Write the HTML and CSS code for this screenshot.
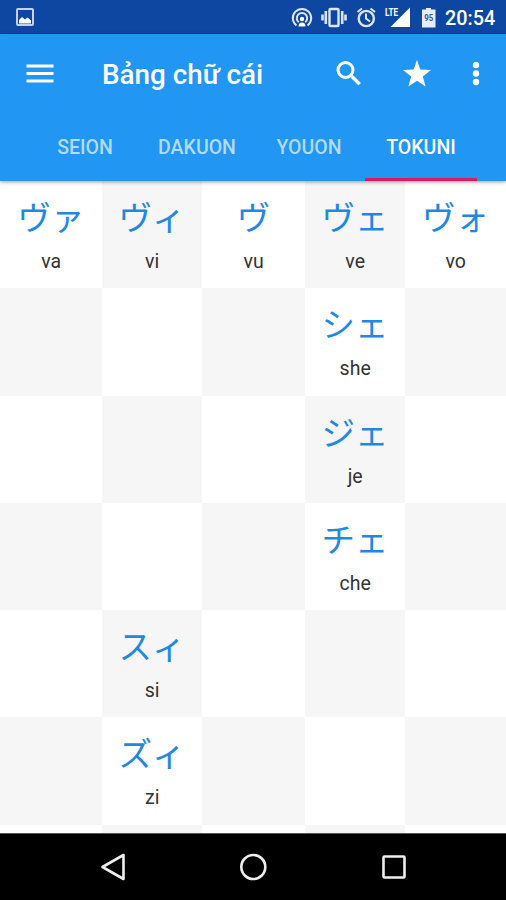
FILE: index.html
```html
<!DOCTYPE html>
<html lang="vi">
<head>
<meta charset="utf-8">
<title>Bảng chữ cái</title>
<link rel="stylesheet" href="styles.css">
</head>
<body>
<div class="screen">
  <header class="status">
    <svg class="status-picture" width="18" height="18" viewBox="0 0 18 18"><rect x="1" y="1" width="16" height="16" rx="1" fill="none" stroke="#c5d0ec" stroke-width="2"/><path d="M3 15.500v-3.500l3-3 3 2.500 2.500-2 3.500 3v3z" fill="#fff"/></svg>
    <svg class="status-icons" width="146" height="26" viewBox="291 5 146 26">
      <g fill="none" stroke="#dce4f6" stroke-width="2">
        <path d="M296.500 25.500a9.200 9.200 0 1 1 11 0M298.800 22.300a5.200 5.200 0 1 1 6.400 0"/>
        <rect x="329.500" y="9" width="9" height="17" rx="1" stroke-width="2.400"/>
        <path d="M325.800 11v13M322.500 14.500v6M342.200 11v13M345.500 14.500v6" stroke-width="2.600"/>
        <circle cx="366.300" cy="18.500" r="7.600" stroke-width="2.400"/>
        <path d="M366 13.500v5l4 3M357.500 12l4.500-3.500M370.500 8.500l4.500 3.500"/>
      </g>
      <circle cx="302" cy="19" r="2.200" fill="#fff"/><path d="M298.500 26.500q0-4 3.500-4t3.500 4z" fill="#fff"/>
      <path d="M410 7.500V27h-19.500z" fill="#fff"/>
      <text class="lte" x="385" y="15.800" textLength="13" lengthAdjust="spacingAndGlyphs">LTE</text>
      <path d="M422 9.500h4V8h5v1.500h4.500v18H422z" fill="#e6ecf8"/>
      <text class="battery" x="424.300" y="20.500" textLength="9" lengthAdjust="spacingAndGlyphs">95</text>
    </svg>
    <span class="clock">20:54</span>
  </header>
  <div class="appbar">
    <div class="toolbar">
      <svg class="menu" width="28" height="20" viewBox="0 0 28 20"><path d="M.500 2h27M.500 9.500h27M.500 17h27" stroke="#fff" stroke-width="3.200"/></svg>
      <h1>Bảng chữ cái</h1>
      <svg class="search" width="26" height="26" viewBox="0 0 26 26"><circle cx="9.500" cy="9" r="7.500" fill="none" stroke="#fff" stroke-width="3"/><path d="M14.700 14.200l9 9" stroke="#fff" stroke-width="3.400"/></svg>
      <svg class="star" width="28" height="27" viewBox="0 0 28 27"><path d="M14 0l3.300 9.500 10.700.4-8.200 6.500L22.600 26.500 14 20.800 5.400 26.500l2.800-10.100L0 9.900l10.700-.4z" fill="#fff"/></svg>
      <svg class="more" width="8" height="24" viewBox="0 0 8 24"><g fill="#fff"><circle cx="4" cy="3" r="3.200"/><circle cx="4" cy="11.500" r="3.200"/><circle cx="4" cy="20" r="3.200"/></g></svg>
    </div>
    <nav class="tabs"><span>SEION</span><span>DAKUON</span><span>YOUON</span><span class="active">TOKUNI</span></nav>
  </div>
  <main class="grid">
    <div class="cell"><b>ヴァ</b><i>va</i></div><div class="cell"><b>ヴィ</b><i>vi</i></div><div class="cell"><b>ヴ</b><i>vu</i></div><div class="cell"><b>ヴェ</b><i>ve</i></div><div class="cell"><b>ヴォ</b><i>vo</i></div>
    <div class="cell"></div><div class="cell"></div><div class="cell"></div><div class="cell"><b>シェ</b><i>she</i></div><div class="cell"></div>
    <div class="cell"></div><div class="cell"></div><div class="cell"></div><div class="cell"><b>ジェ</b><i>je</i></div><div class="cell"></div>
    <div class="cell"></div><div class="cell"></div><div class="cell"></div><div class="cell"><b>チェ</b><i>che</i></div><div class="cell"></div>
    <div class="cell"></div><div class="cell"><b>スィ</b><i>si</i></div><div class="cell"></div><div class="cell"></div><div class="cell"></div>
    <div class="cell"></div><div class="cell"><b>ズィ</b><i>zi</i></div><div class="cell"></div><div class="cell"></div><div class="cell"></div>
    <div class="cell"></div><div class="cell"></div><div class="cell"></div><div class="cell"></div><div class="cell"></div>
  </main>
  <footer class="navbar">
    <svg width="28" height="28" viewBox="0 0 28 28"><path d="M24.500 2v24L3.500 14z"/></svg>
    <svg width="28" height="28" viewBox="0 0 28 28"><circle cx="14.300" cy="14" r="12"/></svg>
    <svg width="28" height="28" viewBox="0 0 28 28"><rect x="3.500" y="3.500" width="21" height="21" rx="1"/></svg>
  </footer>
</div>
</body>
</html>
```
FILE: styles.css
```css
* { box-sizing: border-box; }
body { margin: 0; font-family: Roboto, "Noto Sans CJK JP", sans-serif; }
svg { display: block; flex: none; }
.screen { width: 506px; height: 900px; display: flex; flex-direction: column; overflow: hidden; background: #fff; }
.status { flex: none; height: 34px; background: #0d47a1; border-bottom: 1px solid #0b3d91; display: flex; align-items: flex-start; padding: 5px 10px 0 16px; color: #fff; }
.status-picture { margin-top: 3px; }
.status-icons { margin-left: auto; }
.clock { width: 51px; margin-left: 8px; font-size: 19.800px; font-weight: 500; line-height: 27px; white-space: nowrap; }
.lte { font: 700 11px Roboto, sans-serif; fill: #fff; }
.battery { font: 700 9px Roboto, sans-serif; fill: #2d579f; }
.appbar { flex: none; height: 147px; background: #2196f3; box-shadow: 0 1px 4px rgba(0, 0, 0, .4); z-index: 1; position: relative; }
.toolbar { height: 79px; display: flex; align-items: center; padding: 0 26px; color: #fff; }
h1 { margin: 3px auto 0 48px; font-size: 27.800px; font-weight: 500; line-height: 36px; white-space: nowrap; }
.search { margin-right: 41px; }
.star { margin-right: 41px; }
.tabs { display: grid; grid-template-columns: repeat(4, 112px); height: 68px; padding-left: 29px; }
.tabs span { text-align: center; color: #b1dbfb; font-size: 19.500px; font-weight: 500; line-height: 70px; height: 68px; }
.tabs .active { color: #fff; border-bottom: 3px solid #d81b60; }
.grid { flex: 1; min-height: 0; overflow: hidden; display: grid; grid-template-columns: 102px 100px 103px 100px 101px; grid-auto-rows: 107.300px; }
.cell { text-align: center; padding-top: 13px; }
.cell:nth-child(even) { background: #f6f6f6; }
.cell b, .cell i { display: block; font-style: normal; font-weight: 400; }
.cell b { font-family: "Noto Sans CJK JP", sans-serif; font-size: 33.500px; line-height: 44px; color: #1e88e5; }
.cell i { font-size: 19.500px; line-height: 24px; margin-top: 12px; padding-left: .4px; color: #333; }
.navbar { flex: none; height: 67px; background: #000; border-top: 1px solid #555; padding-bottom: 1px; display: flex; justify-content: center; align-items: center; gap: 112.500px; }
.navbar svg { fill: none; stroke: #eee; stroke-width: 2.600; stroke-linejoin: round; }
```
